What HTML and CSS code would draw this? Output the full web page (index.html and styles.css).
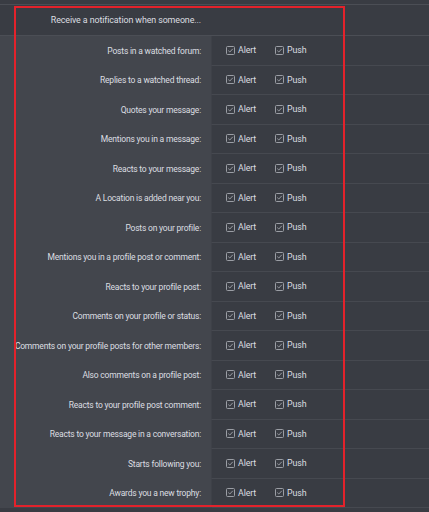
FILE: index.html
```html
<!DOCTYPE html>
<html>
<head>
<meta charset="utf-8">
<link rel="stylesheet" href="styles.css">
</head>
<body>
<div class="page">
  <div class="topstrip"></div>
  <div class="header"><div class="hlabel">Receive a notification when someone...</div></div>
  <div class="rows" id="rows"></div>
  <div class="highlight"></div>
</div>
<script src="app.js"></script>
</body>
</html>
```
FILE: app.js
```js
var labels = [
"Posts in a watched forum:",
"Replies to a watched thread:",
"Quotes your message:",
"Mentions you in a message:",
"Reacts to your message:",
"A Location is added near you:",
"Posts on your profile:",
"Mentions you in a profile post or comment:",
"Reacts to your profile post:",
"Comments on your profile or status:",
"Comments on your profile posts for other members:",
"Also comments on a profile post:",
"Reacts to your profile post comment:",
"Reacts to your message in a conversation:",
"Starts following you:",
"Awards you a new trophy:"
];
var box = '<svg class="cb" viewBox="0 0 9 9" width="9" height="9"><rect x="0.5" y="0.5" width="8" height="8" rx="1" fill="none" stroke="currentColor" stroke-width="1"/><path d="M2.3 4.6 L3.8 6 L6.8 2.8" fill="none" stroke="currentColor" stroke-width="1"/></svg>';
var html = '';
labels.forEach(function(l){
  html += '<div class="row"><div class="label">' + l + '</div><div class="opts">' +
    '<span class="opt alert">' + box + '<span>Alert</span></span>' +
    '<span class="opt">' + box + '<span>Push</span></span></div></div>';
});
document.getElementById('rows').innerHTML = html;
```
FILE: styles.css
```css
html, body { margin: 0; padding: 0; }
body {
  background: #393c43;
  font-family: Roboto, "Noto Sans", sans-serif;
  font-size: 8.5px;
  letter-spacing: -0.2px;
  color: #dcdee1;
  width: 429px;
  height: 512px;
  overflow: hidden;
}
.page { position: relative; }
.topstrip {
  height: 4px;
  border-bottom: 1px solid #4b4e55;
}
.header {
  height: 30px;
  border-bottom: 1px solid #4b4e55;
  background: #393c43;
  display: flex;
  align-items: center;
}
.hlabel {
  width: 201px;
  text-align: right;
  white-space: nowrap;
  font-size: 8.9px;
  letter-spacing: -0.1px;
}
.rows { display: flex; flex-direction: column; }
.row {
  display: grid;
  grid-template-columns: 211px 1fr;
  height: 29.5px;
}
.label {
  background: #43464d;
  display: flex;
  align-items: center;
  justify-content: flex-end;
  padding-right: 10px;
  white-space: nowrap;
  overflow: visible;
}
.opts {
  display: flex;
  align-items: center;
  padding-left: 14px;
  border-left: 1px solid #3e4148;
  border-bottom: 1px solid #464950;
  background: #393c43;
  color: #dcdee1;
  font-size: 8.8px;
  letter-spacing: -0.1px;
}
.opt { display: inline-flex; align-items: center; gap: 3px; }
.opt.alert { width: 49px; }
.cb { color: #9b9ea5; display: block; }
.highlight {
  position: absolute;
  left: 14px;
  top: 6px;
  width: 327px;
  height: 497px;
  border: 2px solid #e3222b;
  pointer-events: none;
}
```
